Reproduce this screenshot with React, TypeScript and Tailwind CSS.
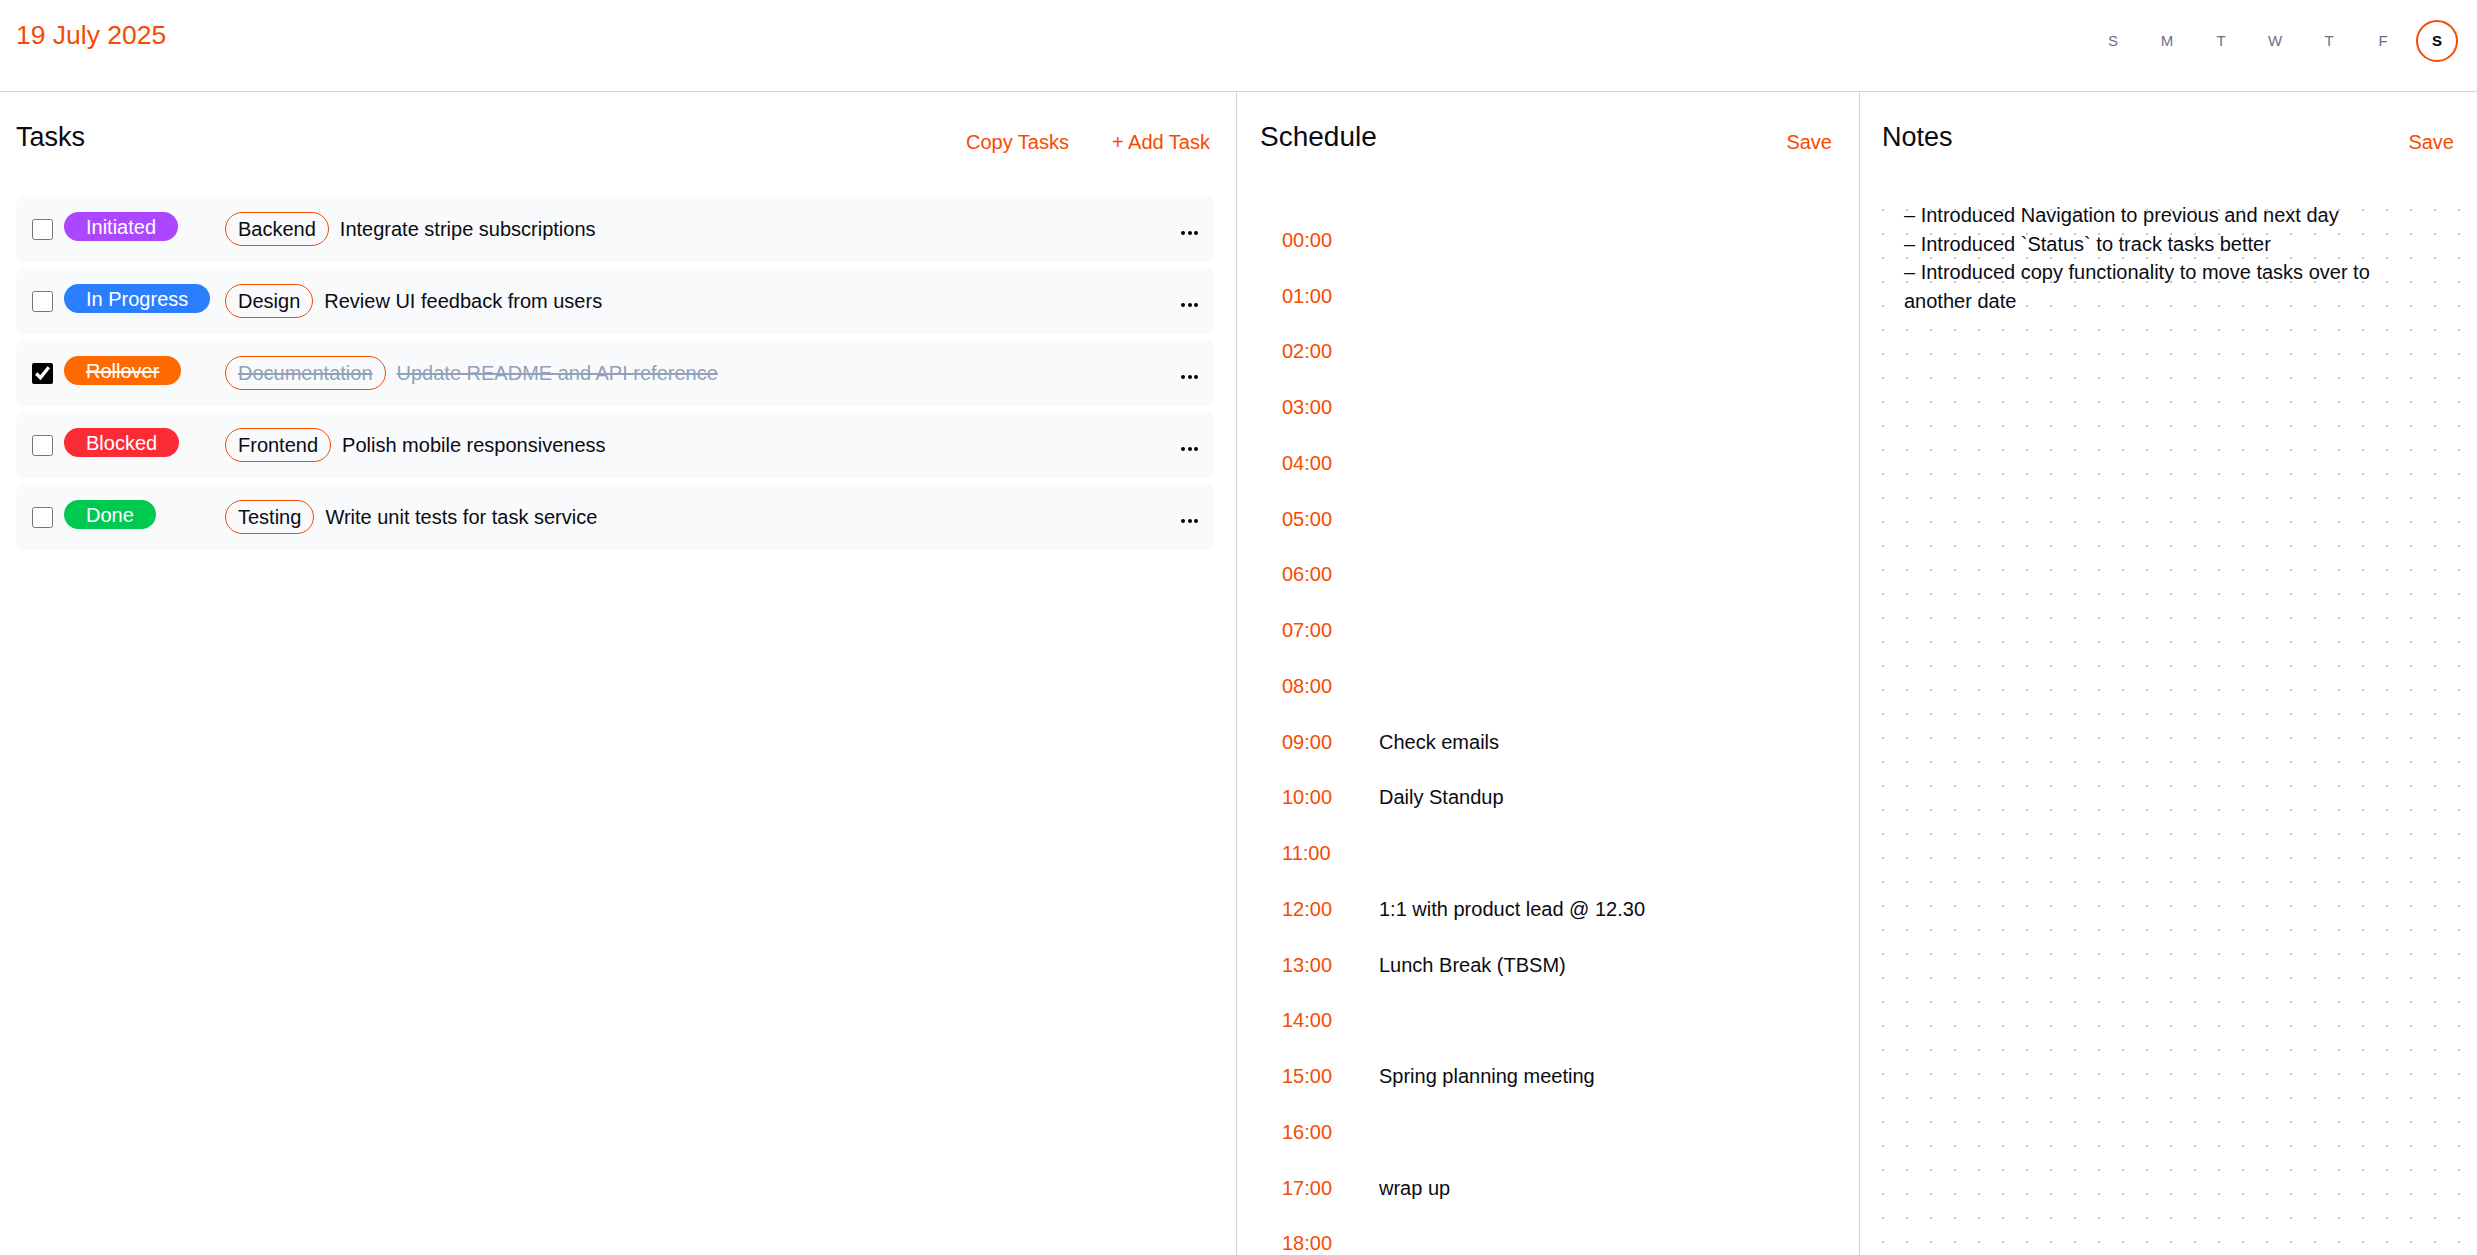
import React from "react";

type Task = { status: string; pill: string; tag: string; text: string; done: boolean };

const tasks: Task[] = [
  { status: "Initiated", pill: "bg-purple-500", tag: "Backend", text: "Integrate stripe subscriptions", done: false },
  { status: "In Progress", pill: "bg-blue-500", tag: "Design", text: "Review UI feedback from users", done: false },
  { status: "Rollover", pill: "bg-orange-500", tag: "Documentation", text: "Update README and API reference", done: true },
  { status: "Blocked", pill: "bg-red-500", tag: "Frontend", text: "Polish mobile responsiveness", done: false },
  { status: "Done", pill: "bg-green-500", tag: "Testing", text: "Write unit tests for task service", done: false },
];

const events: Record<number, string> = {
  9: "Check emails",
  10: "Daily Standup",
  12: "1:1 with product lead @ 12.30",
  13: "Lunch Break (TBSM)",
  15: "Spring planning meeting",
  17: "wrap up",
};

const days = ["S", "M", "T", "W", "T", "F", "S"];

function Dots() {
  return (
    <div className="flex items-center gap-[2.5px] mt-2">
      <span className="w-[4px] h-[4px] rounded-full bg-black" />
      <span className="w-[4px] h-[4px] rounded-full bg-black" />
      <span className="w-[4px] h-[4px] rounded-full bg-black" />
    </div>
  );
}

function TaskRow({ t }: { t: Task }) {
  return (
    <div className="flex items-center h-[66px] rounded-lg bg-gray-50 pl-4 pr-[17px]">
      <input
        type="checkbox"
        defaultChecked={t.done}
        className="w-[21px] h-[21px] m-0 accent-black shrink-0"
      />
      <div className="w-[150px] ml-[11px] shrink-0 flex">
        <span
          className={`${t.pill} inline-flex items-center h-[29px] px-[22px] rounded-full text-white text-[20px] leading-none mb-[5px] ${
            t.done ? "line-through" : ""
          }`}
        >
          {t.status}
        </span>
      </div>
      <span
        className={`ml-[11px] h-[34px] px-[12px] rounded-full border border-orange-600 flex items-center text-[20px] leading-none ${
          t.done ? "text-slate-400 line-through" : "text-[#0b0b14]"
        }`}
      >
        {t.tag}
      </span>
      <span className={`ml-[11px] text-[20px] ${t.done ? "text-slate-400 line-through" : "text-[#0b0b14]"}`}>
        {t.text}
      </span>
      <div className="ml-auto">
        <Dots />
      </div>
    </div>
  );
}

export default function App() {
  const hours = Array.from({ length: 19 }, (_, i) => i);
  return (
    <div className="h-[1255px] overflow-hidden flex flex-col bg-white font-['Liberation_Sans',Arial,sans-serif] text-[#0b0b14]">
      <header className="h-[92px] shrink-0 flex justify-between items-start border-b border-gray-300 pl-4 pr-[19px] pt-[17px]">
        <div className="text-[26.5px] leading-[36px] text-orange-600">19 July 2025</div>
        <div className="flex gap-3 mt-[3px]">
          {days.map((d, i) => (
            <div
              key={i}
              className={`w-[42px] h-[42px] rounded-full flex items-center justify-center text-[15px] ${
                i === 6 ? "border-2 border-orange-600 text-black font-bold" : "text-gray-500"
              }`}
            >
              {d}
            </div>
          ))}
        </div>
      </header>

      <main className="flex-1 min-h-0 grid grid-cols-[1237px_623px_1fr]">
        {/* Tasks */}
        <section className="border-r border-gray-300 pl-4 pr-[21px] pt-[27px] overflow-hidden">
          <div className="flex items-start justify-between pr-[5px]">
            <h2 className="text-[27px] leading-[36px]">Tasks</h2>
            <div className="flex gap-[43px] text-[20px] leading-[24px] mt-[11px] text-orange-600">
              <button>Copy Tasks</button>
              <button>+ Add Task</button>
            </div>
          </div>
          <div className="mt-[41px] flex flex-col gap-[6px]">
            {tasks.map((t, i) => (
              <TaskRow key={i} t={t} />
            ))}
          </div>
        </section>

        {/* Schedule */}
        <section className="border-r border-gray-300 pl-[23px] pr-[27px] pt-[27px] overflow-hidden">
          <div className="flex items-start justify-between">
            <h2 className="text-[28px] leading-[36px]">Schedule</h2>
            <button className="text-[20px] leading-[24px] mt-[11px] text-orange-600">Save</button>
          </div>
          <div className="mt-[57px] pl-[22px] flex flex-col">
            {hours.map((h) => (
              <div key={h} className="h-[55.75px] shrink-0 flex items-center text-[20px]">
                <span className="w-[97px] text-orange-600">{String(h).padStart(2, "0")}:00</span>
                <span className="text-[#0b0b14]">{events[h] ?? ""}</span>
              </div>
            ))}
          </div>
        </section>

        {/* Notes */}
        <section className="pl-[11px] pr-[6px] pt-[27px] overflow-hidden flex flex-col">
          <div className="flex items-start justify-between pl-[11px] pr-[17px]">
            <h2 className="text-[27px] leading-[36px]">Notes</h2>
            <button className="text-[20px] leading-[24px] mt-[11px] text-orange-600">Save</button>
          </div>
          <div className="mt-[43px] flex-1 pl-[33px] pr-[33px] pt-[3px] text-[20px] leading-[28.5px] bg-[radial-gradient(circle,#c4c4c4_1px,transparent_1.3px)] bg-size-[24px_24px]">
            <div>– Introduced Navigation to previous and next day</div>
            <div>– Introduced `Status` to track tasks better</div>
            <div>– Introduced copy functionality to move tasks over to another date</div>
          </div>
        </section>
      </main>
    </div>
  );
}
